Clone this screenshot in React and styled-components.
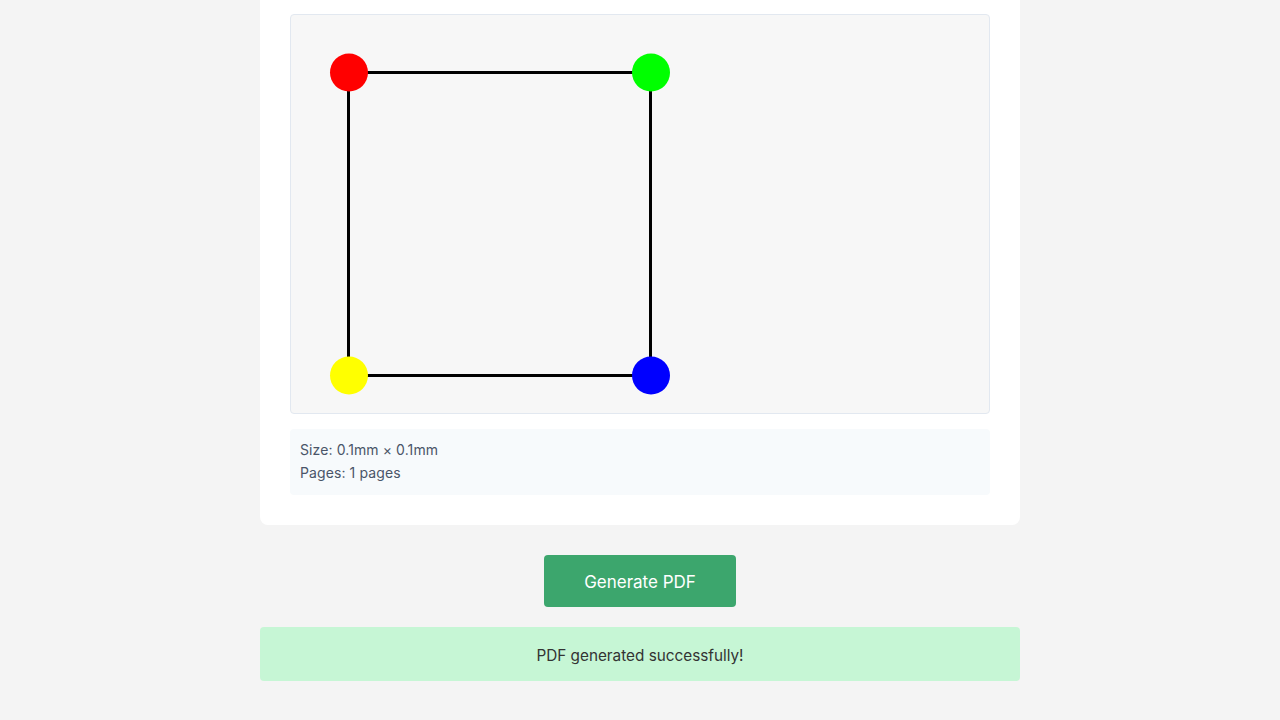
import styled, { createGlobalStyle } from "styled-components";

const GlobalStyle = createGlobalStyle`
  html, body {
    margin: 0;
    padding: 0;
    background: #f4f4f4;
    font-family: Inter, "Noto Sans", sans-serif;
  }
`;

const Page = styled.main`
  width: 760px;
  margin: 0 auto;
  display: flex;
  flex-direction: column;
  align-items: center;
`;

const Card = styled.section`
  box-sizing: border-box;
  width: 100%;
  margin-top: -16px;
  padding: 30px;
  background: #fff;
  border-radius: 8px;
  display: flex;
  flex-direction: column;
  gap: 15px;
`;

const Preview = styled.div`
  box-sizing: border-box;
  width: 700px;
  height: 400px;
  background: #f7f7f7;
  border: 1px solid #e2e8f0;
  border-radius: 4px;
  svg {
    display: block;
  }
`;

const Info = styled.div`
  padding: 9px 10px 11px;
  background: #f7fafc;
  border-radius: 4px;
  color: #4a5568;
  font-size: 14px;
  line-height: 23px;
  letter-spacing: 0.1px;
`;

const GenerateButton = styled.button`
  margin-top: 30px;
  height: 52px;
  padding: 2px 40px 0;
  background: #3ca66d;
  color: #fff;
  border: none;
  border-radius: 4px;
  font-family: inherit;
  font-size: 17px;
  cursor: pointer;
`;

const Message = styled.div`
  box-sizing: border-box;
  width: 100%;
  margin-top: 20px;
  padding: 17px 15px 13px;
  background: #c6f6d5;
  color: #333;
  border-radius: 4px;
  text-align: center;
  font-size: 15.3px;
  line-height: 24px;
`;

const corners = [
  { x: 57.5, y: 57.5, fill: "#ff0000" },
  { x: 359.5, y: 57.5, fill: "#00ff00" },
  { x: 359.5, y: 360.5, fill: "#0000ff" },
  { x: 57.5, y: 360.5, fill: "#ffff00" },
];

const Shape = () => (
  <svg width="698" height="398" viewBox="0 0 698 398">
    <polygon
      points={corners.map((c) => `${c.x},${c.y}`).join(" ")}
      fill="none"
      stroke="#000"
      strokeWidth="3"
    />
    {corners.map((c) => (
      <circle key={c.fill} cx={c.x + 0.5} cy={c.y} r="19" fill={c.fill} />
    ))}
  </svg>
);

const App = () => {
  return (
    <>
      <GlobalStyle />
      <Page>
        <Card>
          <Preview>
            <Shape />
          </Preview>
          <Info>
            <div>Size: 0.1mm × 0.1mm</div>
            <div>Pages: 1 pages</div>
          </Info>
        </Card>
        <GenerateButton>Generate PDF</GenerateButton>
        <Message>PDF generated successfully!</Message>
      </Page>
    </>
  );
};

export default App;
